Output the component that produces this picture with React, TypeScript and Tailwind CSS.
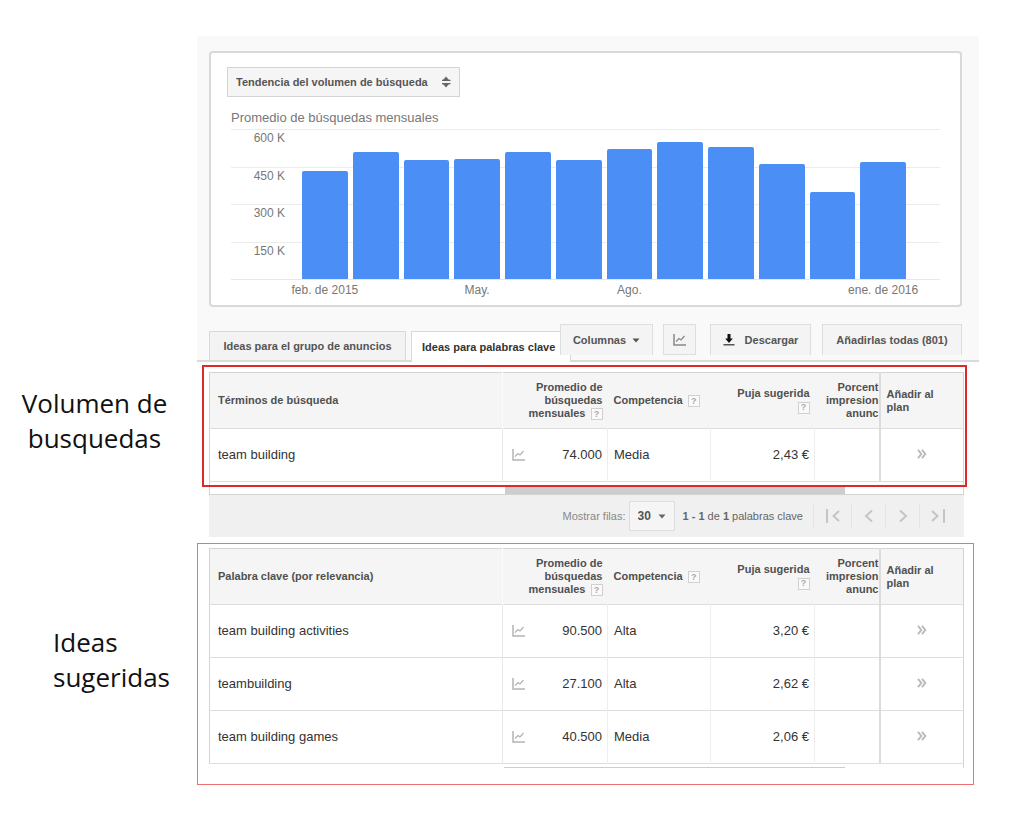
import type { ReactNode } from "react";

type Keyword = { term: string; volume: string; competition: string; bid: string };

const searchTerms: Keyword[] = [
  { term: "team building", volume: "74.000", competition: "Media", bid: "2,43 €" },
];

const ideas: Keyword[] = [
  { term: "team building activities", volume: "90.500", competition: "Alta", bid: "3,20 €" },
  { term: "teambuilding", volume: "27.100", competition: "Alta", bid: "2,62 €" },
  { term: "team building games", volume: "40.500", competition: "Media", bid: "2,06 €" },
];

// Monthly searches, in thousands
const MAX_VOLUME = 600;
const months = [
  { label: "feb. de 2015", value: 432 },
  { label: "", value: 508 },
  { label: "", value: 476 },
  { label: "May.", value: 480 },
  { label: "", value: 508 },
  { label: "", value: 476 },
  { label: "Ago.", value: 520 },
  { label: "", value: 550 },
  { label: "", value: 530 },
  { label: "", value: 460 },
  { label: "", value: 348 },
  { label: "ene. de 2016", value: 468 },
];

export default function App() {
  return (
    <div className="grid grid-cols-[197px_minmax(0,1fr)] bg-white pt-9 pr-[45px] font-['Liberation_Sans',Arial,sans-serif] text-[#444]">
      {/* CHART + TOOLBAR */}
      <section className="col-start-2 border-b-2 border-[#dadada] bg-[#f9f9f9] pt-[15px] pr-[17px] pl-3">
        <TrendCard />
        <Toolbar />
      </section>

      {/* SEARCH TERMS */}
      <Note className="pt-6 pr-2 text-center">
        Volumen de
        <br />
        busquedas
      </Note>
      <section className="relative pt-[10px] pr-[15px] pl-3">
        <KeywordTable title="Términos de búsqueda" rows={searchTerms} />
        <div className="border-x border-b border-[#d4d4d4] pt-[3px]">
          <div className="mr-[118px] ml-[295px] h-[9px] bg-[#cdcdcd]" />
        </div>
        <Pagination />
        <div className="pointer-events-none absolute top-[3px] right-[12px] left-[5px] h-[122px] border-2 border-[#dc2a26]" />
      </section>

      {/* SUGGESTED IDEAS */}
      <Note className="pt-[88px] pl-[53px]">
        Ideas
        <br />
        sugeridas
      </Note>
      <section className="mt-[6px] mr-[5px] border border-[#f07070] pt-1 pr-[9px] pb-4 pl-[11px]">
        <KeywordTable title="Palabra clave (por relevancia)" rows={ideas} />
        <div className="border-r border-[#d4d4d4] pt-[3px]">
          <div className="mr-[118px] ml-[295px] h-px bg-[#cdcdcd]" />
        </div>
      </section>
    </div>
  );
}

function Note({ className, children }: { className: string; children: ReactNode }) {
  return (
    <p className={`font-['Open_Sans',sans-serif] text-[26px] leading-[35px] text-[#111] ${className}`}>
      {children}
    </p>
  );
}

function TrendCard() {
  return (
    <div className="rounded border-2 border-[#d9d9d9] bg-white px-4 pt-[14px] pb-[5px]">
      <div className="relative inline-flex items-center">
        <select
          aria-label="Gráfico"
          className="h-[30px] w-[233px] appearance-none border border-[#d4d4d4] bg-[#f5f5f5] pl-2 text-[11px] font-bold text-[#555]"
        >
          <option>Tendencia del volumen de búsqueda</option>
        </select>
        <svg viewBox="0 0 10 12" className="pointer-events-none absolute right-[9px] h-3 w-[10px] fill-[#666]">
          <path d="M5 .5 8 4H2zM5 11.500 2 8h6z" />
          <path d="M1 3.800h8.500v1.200H1zM1 7h8.500v1.200H1z" />
        </svg>
      </div>

      <h2 className="mt-[11px] pl-1 text-[13px] leading-5 text-[#777]">Promedio de búsquedas mensuales</h2>

      <div className="mt-px mr-1 ml-1">
        <div className="relative flex h-[151px] flex-col border-b border-[#e8e8e8]">
          {[600, 450, 300, 150].map((tick) => (
            <div key={tick} className="flex-1 border-t border-[#ececec]">
              <span className="block w-[54px] text-right text-[12px] leading-[17px] text-[#777]">{tick} K</span>
            </div>
          ))}
          <div className="absolute inset-y-0 right-[34px] left-[71px] flex items-end gap-[5px]">
            {months.map((m, i) => (
              <div
                key={i}
                className="flex-1 rounded-t-xs bg-[#4b8ef5]"
                style={{ height: `${(m.value / MAX_VOLUME) * 100}%` }}
              />
            ))}
          </div>
        </div>
        <div className="mr-[34px] ml-[71px] grid h-5 grid-cols-12 gap-[5px]">
          {months.map((m, i) => (
            <span key={i} className="flex justify-center text-[12px] leading-5 whitespace-nowrap text-[#777]">
              {m.label}
            </span>
          ))}
        </div>
      </div>
    </div>
  );
}

function Toolbar() {
  const button = "flex items-center justify-center border border-[#dedede] bg-[#f4f4f4] text-[#555]";
  return (
    <div className="mt-[17px] flex h-9 text-[11px] font-bold">
      <div role="tablist" className="-mr-3 flex shrink-0 items-end gap-[5px]">
        <button role="tab" className="h-[29px] w-[197px] border border-b-0 border-[#d9d9d9] bg-[#f3f3f3] text-[#555]">
          Ideas para el grupo de anuncios
        </button>
        <button
          role="tab"
          aria-selected="true"
          className="-mb-[2px] h-[31px] w-[160px] border border-b-0 border-[#d9d9d9] bg-white pl-[10px] text-left whitespace-nowrap text-[#333]"
        >
          Ideas para palabras clave
        </button>
      </div>
      <div className="relative ml-auto flex h-[31px] shrink-0">
        <button className={`${button} w-[93px] gap-[6px] border-b-0`}>
          Columnas
          <Caret />
        </button>
        <button aria-label="Gráfico" className={`${button} ml-[10px] w-[33px]`}>
          <TrendIcon className="text-[#888]" />
        </button>
        <button className={`${button} ml-[14px] w-[101px] gap-[10px] border-b-0`}>
          <svg viewBox="0 0 12 12" className="h-3 w-3">
            <path d="M4.500 0h3v4.500h2.300L6 9 2.200 4.500h2.300z" fill="#111" />
            <path d="M.5 10h11v1.500H.5z" fill="#555" />
          </svg>
          Descargar
        </button>
        <button className={`${button} ml-[11px] w-[140px] border-b-0`}>Añadirlas todas (801)</button>
      </div>
    </div>
  );
}

function KeywordTable({ title, rows }: { title: string; rows: Keyword[] }) {
  return (
    <table className="w-full table-fixed border-collapse border border-[#d4d4d4] text-[13px] text-[#333]">
      <colgroup>
        <col />
        <col className="w-[105px]" />
        <col className="w-[103px]" />
        <col className="w-[104px]" />
        <col className="w-[65px]" />
        <col className="w-[84px]" />
      </colgroup>
      <thead>
        <tr className="h-14 border-b border-[#ddd] bg-[#f5f5f5] text-[11px] leading-[13px] text-[#505050]">
          <th className="border-r border-[#fbfbfb] pl-2 text-left">{title}</th>
          <th className="pr-[5px] text-right">
            Promedio de
            <br />
            búsquedas
            <br />
            mensuales <Help />
          </th>
          <th className="pl-[6px] text-left whitespace-nowrap">
            Competencia <Help />
          </th>
          <th className="pr-[5px] text-right whitespace-nowrap">
            Puja sugerida
            <br />
            <Help />
          </th>
          <th className="overflow-hidden border-r-2 border-[#dcdcdc] text-right">
            Porcent
            <br />
            impresion
            <br />
            anunc
          </th>
          <th className="pr-6 pl-[6px] text-left">Añadir al plan</th>
        </tr>
      </thead>
      <tbody>
        {rows.map((row) => (
          <tr key={row.term} className="h-[53px] border-b border-[#dedede]">
            <td className="border-r border-[#e8e8e8] pl-2">{row.term}</td>
            <td className="border-r border-[#eee] pr-[5px] pl-[9px]">
              <div className="flex items-center justify-between">
                <TrendIcon className="text-[#b4b4b4]" />
                {row.volume}
              </div>
            </td>
            <td className="border-r border-[#eee] pl-[6px]">{row.competition}</td>
            <td className="border-r border-[#eee] pr-[5px] text-right">{row.bid}</td>
            <td className="border-r-2 border-[#dcdcdc]" />
            <td className="pb-1 text-center">
              <button aria-label="Añadir al plan" className="align-middle">
                <svg viewBox="0 0 10 10" className="h-[10px] w-[10px] fill-none stroke-[#bbb] stroke-2">
                  <path d="M1 .8 4.300 5 1 9.200M5 .8 8.300 5 5 9.200" />
                </svg>
              </button>
            </td>
          </tr>
        ))}
      </tbody>
    </table>
  );
}

function Pagination() {
  const pager = "flex h-6 items-center justify-center border-l border-[#e4e4e4]";
  const icon = "h-[14px] w-[14px] fill-none stroke-[#c4c4c4] stroke-2";
  return (
    <div className="flex h-[42px] items-center justify-end bg-[#f0f0f0] text-[11px]">
      <label htmlFor="page-size" className="text-[#888]">
        Mostrar filas:
      </label>
      <div className="relative mr-2 ml-[3px] flex items-center">
        <select
          id="page-size"
          className="h-[30px] w-[46px] appearance-none border border-[#ddd] bg-[#f5f5f5] pl-2 text-[12px] font-bold text-[#555]"
        >
          <option>30</option>
        </select>
        <span className="pointer-events-none absolute right-[9px] text-[#666]">
          <Caret />
        </span>
      </div>
      <span className="mr-[10px] text-[#666]">
        <b>1 - 1</b> de <b>1</b> palabras clave
      </span>
      <button aria-label="Primera" className={`${pager} w-[38px]`}>
        <svg viewBox="0 0 14 14" className={icon}>
          <path d="M1 0v14M13 2 7.500 7l5.500 5" />
        </svg>
      </button>
      <button aria-label="Anterior" className={`${pager} w-[34px]`}>
        <svg viewBox="0 0 14 14" className={icon}>
          <path d="M10 1.500 4 7l6 5.500" />
        </svg>
      </button>
      <button aria-label="Siguiente" className={`${pager} w-[34px]`}>
        <svg viewBox="0 0 14 14" className={icon}>
          <path d="M4 1.500 10 7l-6 5.500" />
        </svg>
      </button>
      <button aria-label="Última" className={`${pager} w-[45px] pr-2`}>
        <svg viewBox="0 0 14 14" className={icon}>
          <path d="M13 0v14M1 2l5.500 5L1 12" />
        </svg>
      </button>
    </div>
  );
}

function Help() {
  return (
    <button className="ml-[2px] inline-flex h-3 w-3 items-center justify-center border border-[#d0d0d0] bg-[#fafafa] align-middle text-[9px] leading-none font-bold text-[#aaa]">
      ?
    </button>
  );
}

function Caret() {
  return (
    <svg viewBox="0 0 8 5" className="h-[5px] w-2 fill-current">
      <path d="M.5.5h7L4 4.500z" />
    </svg>
  );
}

function TrendIcon({ className }: { className: string }) {
  return (
    <svg viewBox="0 0 13 12" className={`h-3 w-[13px] fill-none stroke-current ${className}`}>
      <path d="M1 0v11h12" strokeWidth="1.500" />
      <path d="M3 7.500 6 4.500 8 6l3.500-4" strokeWidth="1.200" />
    </svg>
  );
}
